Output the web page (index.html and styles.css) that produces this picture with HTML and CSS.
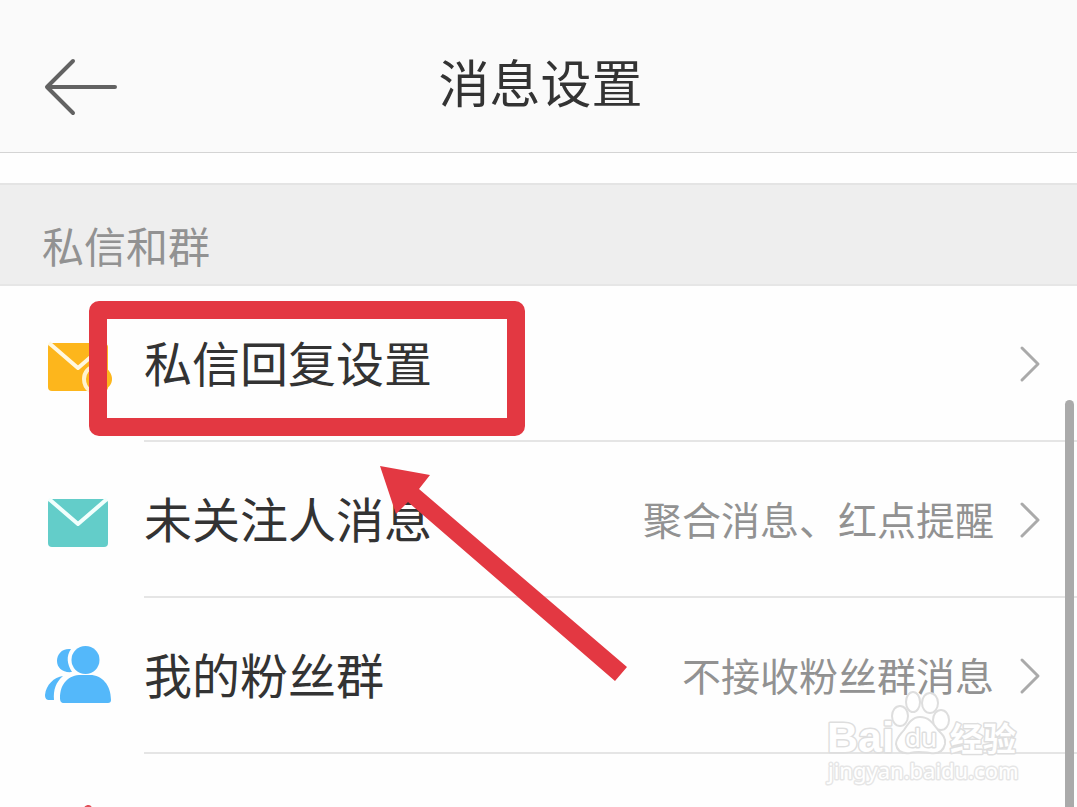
FILE: index.html
```html
<!DOCTYPE html>
<html lang="zh-CN">
<head>
<meta charset="utf-8">
<meta name="viewport" content="width=device-width, initial-scale=1">
<title>消息设置</title>
<link rel="stylesheet" href="styles.css">
</head>
<body>
<div class="screen">
  <header class="topbar">
    <button class="back" type="button" aria-label="返回">
      <svg width="76" height="60" viewBox="0 0 76 60"><path d="M31 4 5 30 31 56M6 30H73" fill="none" stroke="#626262" stroke-width="4" stroke-linecap="round" stroke-linejoin="round"/></svg>
    </button>
    <h1 class="title">消息设置</h1>
  </header>
  <main class="content">
    <h2 class="section">私信和群</h2>
    <ul class="list">
      <li><a class="row" href="#reply">
        <span class="icon"><svg width="72" height="64" viewBox="0 0 72 64"><rect x="6" y="8" width="60" height="48" rx="4" fill="#fdb61c"/><path d="m7 8 29 25L65 8" fill="none" stroke="#fff8e0" stroke-width="4" stroke-linejoin="round"/><path d="M64 33c-3-2-6-3-10-2-8 1-12 7-12 13 0 5 2 9 6 12" fill="none" stroke="#fff3d0" stroke-width="4"/><path d="M62 31c5 4 8 8 8 13s-3 8-8 12z" fill="#fdb61c"/></svg></span>
        <span class="line"><span class="label">私信回复设置</span><svg class="chevron" viewBox="0 0 22 36"><path d="m3 2 16 16L3 34"/></svg></span>
      </a></li>
      <li><a class="row" href="#strangers">
        <span class="icon"><svg width="72" height="64" viewBox="0 0 72 64"><rect x="6" y="8" width="60" height="48" rx="4" fill="#63cdc9"/><path d="m7 8 29 25L65 8" fill="none" stroke="#f2fffd" stroke-width="4" stroke-linejoin="round"/></svg></span>
        <span class="line"><span class="label">未关注人消息</span><span class="value">聚合消息、红点提醒</span><svg class="chevron" viewBox="0 0 22 36"><path d="m3 2 16 16L3 34"/></svg></span>
      </a></li>
      <li><a class="row" href="#fans">
        <span class="icon"><svg width="72" height="64" viewBox="0 0 72 64" fill="#54b8fa"><g transform="translate(0 -4)"><circle cx="43.500" cy="17" r="14"/><path d="M29 6C20 5 15 11 15 18c0 7 6 12 15 11-5-8-6-16-1-23zM21 33C12 34 4 42 3 52c0 4 2 5 4 5h5c-1-10 2-18 9-24zM18 55c0-15 9-23 21-23h9c12 0 21 10 21 25 0 2-1 3-3 3H22c-3 0-4-2-4-5z"/></g></svg></span>
        <span class="line"><span class="label">我的粉丝群</span><span class="value">不接收粉丝群消息</span><svg class="chevron" viewBox="0 0 22 36"><path d="m3 2 16 16L3 34"/></svg></span>
      </a></li>
      <li><a class="row" href="#more" aria-label="更多">
        <span class="icon"><svg width="72" height="64" viewBox="0 0 72 64"><path d="M41 6c2-4 6-5 8-3l9 15v34H14V20z" fill="#e05058"/></svg></span>
        <span class="line"></span>
      </a></li>
    </ul>
  </main>
  <div class="scrollbar"></div>
  <div class="highlight"></div>
  <svg class="pointer" width="250" height="218" viewBox="0 0 250 218"><path d="M1 1 51 10 40 24 248 202 236 216 29 37 17 49z" fill="#e33842"/></svg>
  <svg class="watermark" width="200" height="100" viewBox="0 0 200 100">
    <text class="brand" x="2" y="60">Bai</text>
    <g class="paw">
      <ellipse cx="75" cy="24" rx="8" ry="10"/><ellipse cx="88" cy="10" rx="7" ry="10"/><ellipse cx="105" cy="11" rx="8" ry="10"/><ellipse cx="116" cy="28" rx="8" ry="10"/>
      <path d="M95 25c10 0 14 8 18 13 5 5 8 8 7 14-2 9-9 10-15 9-8-1-12-2-20 0-8 1-13-2-14-9 0-6 4-9 8-14 4-6 8-13 16-13z"/>
    </g>
    <text class="du" x="80" y="55">du</text>
    <text class="cn" x="125" y="59">经验</text>
    <text class="domain" x="3" y="87">jingyan.baidu.com</text>
  </svg>
</div>
</body>
</html>
```
FILE: styles.css
```css
* {
  box-sizing: border-box;
}

body {
  margin: 0;
  background: #fefefe;
  color: #333;
  font-family: "Noto Sans CJK SC", sans-serif;
}

svg {
  overflow: visible;
}

.screen {
  position: relative;
  height: 100vh;
  overflow: hidden;
}

.topbar {
  display: grid;
  grid-template-columns: 120px 1fr 116px;
  align-items: start;
  padding: 43px 0 33px;
  background: #fafafa;
  border-bottom: 1px solid #d4d4d4;
}

.back {
  display: flex;
  padding: 14px 0 0 42px;
  border: 0;
  background: none;
}

.title {
  margin: 0;
  font-size: 51px;
  font-weight: 400;
  line-height: 76px;
  text-align: center;
}

.content {
  padding-top: 30px;
}

.section {
  margin: 0;
  padding: 30px 42px 9px;
  background: #eee;
  border-top: 2px solid #e4e4e4;
  border-bottom: 2px solid #e6e6e6;
  color: #929292;
  font-size: 42px;
  font-weight: 400;
  line-height: 60px;
}

.list {
  margin: 0;
  padding: 0;
  list-style: none;
}

.row {
  display: flex;
  color: inherit;
  text-decoration: none;
}

.icon {
  display: flex;
  align-items: center;
  flex: 0 0 144px;
  height: 156px;
  padding: 6px 0 0 42px;
}

.line {
  display: flex;
  align-items: center;
  flex: 1;
  height: 156px;
  padding: 2px 36px 0 0;
  border-bottom: 2px solid #e5e5e5;
}

.label {
  flex: 1;
  padding-bottom: 6px;
  font-size: 48px;
  line-height: 72px;
}

.value {
  padding-bottom: 4px;
  color: #929292;
  font-size: 39px;
  line-height: 60px;
}

.chevron {
  width: 22px;
  height: 36px;
  margin-left: 25px;
  fill: none;
  stroke: #aaa;
  stroke-width: 3;
  stroke-linecap: round;
  stroke-linejoin: round;
}

.scrollbar {
  position: absolute;
  top: 400px;
  right: 3px;
  bottom: 0;
  width: 9px;
  border-radius: 5px 5px 0 0;
  background: #aaa;
}

.highlight {
  position: absolute;
  top: 301px;
  left: 89px;
  width: 436px;
  height: 135px;
  border: 18px solid #e33842;
  border-radius: 10px;
}

.pointer {
  position: absolute;
  top: 465px;
  left: 379px;
}

.watermark {
  position: absolute;
  top: 692px;
  left: 825px;
  fill: #fff;
  stroke: #dedede;
}

.watermark text {
  font-family: "Noto Sans", "Noto Sans CJK SC", sans-serif;
  paint-order: stroke;
  stroke-width: 3;
  stroke-linejoin: round;
}

.paw {
  stroke-width: 2;
}

.watermark .brand {
  font-family: "Liberation Sans", sans-serif;
  font-size: 43px;
  font-weight: 700;
}

.watermark .du {
  font-size: 26px;
}

.watermark .cn {
  font-size: 33px;
  font-weight: 700;
}

.watermark .domain {
  font-size: 22px;
  stroke: #e6e6e6;
}
```
